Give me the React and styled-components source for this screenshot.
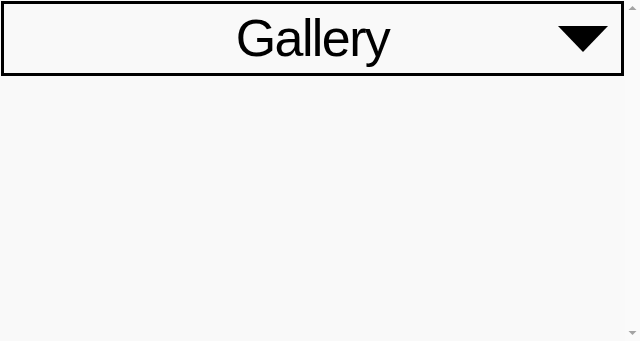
import styled, { createGlobalStyle } from "styled-components";

const GlobalStyle = createGlobalStyle`
  html, body {
    margin: 0;
    height: 100%;
    overflow: hidden;
    background: #f9f9f9;
  }
  body {
    font-family: "Liberation Sans", Arial, sans-serif;
  }
`;

const Frame = styled.div`
  display: flex;
  height: 100vh;
  background: #f9f9f9;
`;

const Page = styled.div`
  flex: 1;
  min-width: 0;
  padding: 1px;
`;

const ScrollTrack = styled.div`
  width: 15px;
  flex: none;
  background: #fafafa;
  display: flex;
  flex-direction: column;
  justify-content: space-between;
`;

const ScrollArrow = styled.svg`
  display: block;
`;

const Picker = styled.div`
  box-sizing: border-box;
  height: 75px;
  border: 3px solid #000;
  display: grid;
  grid-template-columns: 1fr auto 1fr;
  align-items: center;
  cursor: pointer;
`;

const Label = styled.span`
  grid-column: 2;
  font-size: 52px;
  letter-spacing: -1.6px;
  color: #000;
  line-height: 1.15;
  padding-top: 1px;
`;

const Caret = styled.svg`
  grid-column: 3;
  justify-self: end;
  margin-right: 13px;
  margin-top: 1px;
`;

function App() {
  return (
    <Frame>
      <GlobalStyle />
      <Page>
        <Picker>
          <Label>Gallery</Label>
          <Caret width="50" height="26" viewBox="0 0 50 26">
            <polygon points="0,0 50,0 25,26" fill="#000" />
          </Caret>
        </Picker>
      </Page>
      <ScrollTrack>
        <ScrollArrow width="15" height="15" viewBox="0 0 15 15">
          <polygon points="3.5,10 11.5,10 7.5,6" fill="#a3a3a3" />
        </ScrollArrow>
        <ScrollArrow width="15" height="15" viewBox="0 0 15 15">
          <polygon points="3.5,5 11.5,5 7.5,9" fill="#a3a3a3" />
        </ScrollArrow>
      </ScrollTrack>
    </Frame>
  );
}

export default App;
